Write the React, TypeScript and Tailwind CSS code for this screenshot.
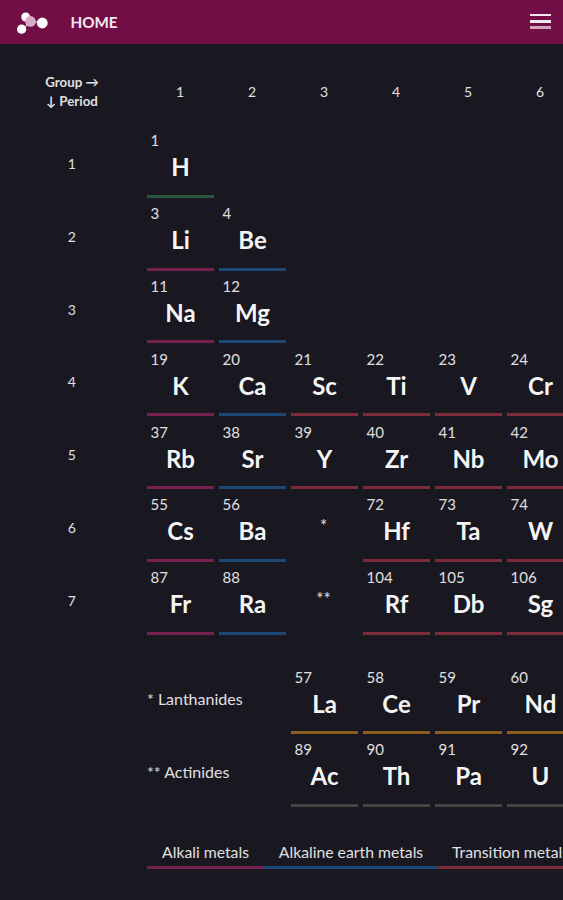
type Element = [number, string, string];

const GREEN = 'border-[#27573f]';
const PINK = 'border-[#762050]';
const BLUE = 'border-[#1c4875]';
const RED = 'border-[#7c2b39]';
const ORANGE = 'border-[#8b5c20]';
const GRAY = 'border-[#444340]';

const periods: (Element | string)[][] = [
  [[1, 'H', GREEN]],
  [[3, 'Li', PINK], [4, 'Be', BLUE]],
  [[11, 'Na', PINK], [12, 'Mg', BLUE]],
  [[19, 'K', PINK], [20, 'Ca', BLUE], [21, 'Sc', RED], [22, 'Ti', RED], [23, 'V', RED], [24, 'Cr', RED]],
  [[37, 'Rb', PINK], [38, 'Sr', BLUE], [39, 'Y', RED], [40, 'Zr', RED], [41, 'Nb', RED], [42, 'Mo', RED]],
  [[55, 'Cs', PINK], [56, 'Ba', BLUE], '*', [72, 'Hf', RED], [73, 'Ta', RED], [74, 'W', RED]],
  [[87, 'Fr', PINK], [88, 'Ra', BLUE], '**', [104, 'Rf', RED], [105, 'Db', RED], [106, 'Sg', RED]],
];

const series: [string, Element[]][] = [
  ['* Lanthanides', [[57, 'La', ORANGE], [58, 'Ce', ORANGE], [59, 'Pr', ORANGE], [60, 'Nd', ORANGE]]],
  ['** Actinides', [[89, 'Ac', GRAY], [90, 'Th', GRAY], [91, 'Pa', GRAY], [92, 'U', GRAY]]],
];

function Cell({ item }: { item: Element | string }) {
  if (typeof item === 'string') {
    return <div className="w-[67px] shrink-0 pt-[27px] pr-[2px] text-center text-[17px] leading-5">{item}</div>;
  }
  const [number, symbol, color] = item;
  return (
    <div className={`w-[67px] shrink-0 border-b-3 ${color}`}>
      <div className="pt-[5.4px] pl-[3.5px] text-[15px] leading-5">{number}</div>
      <div className="pt-[3px] text-center text-[24px] leading-7 font-bold text-[#f5f5f6]">{symbol}</div>
    </div>
  );
}

function Header() {
  return (
    <header className="flex h-[44px] items-center bg-[#720e45] pr-[12px] pl-4">
      <svg className="h-6 w-8" viewBox="0 0 32 24" fill="none">
        <path d="M14 12H26M14 12L6 20" stroke="#d9a9c4" strokeWidth="1.3" />
        <circle cx="9.7" cy="7" r="4.5" fill="#fff" />
        <circle cx="5.6" cy="19.2" r="4.6" fill="#fff" />
        <circle cx="14.5" cy="11.4" r="5.3" fill="#d9a9c8" />
        <circle cx="26.3" cy="13" r="5.4" fill="#fff" />
      </svg>
      <span className="ml-[22.5px] text-[15.2px] font-bold text-[#f4e9ef]">HOME</span>
      <div className="mb-px ml-auto flex w-[21px] flex-col gap-[3px]">
        <div className="mb-px h-[2px] bg-[#f3e6ed]" />
        <div className="h-[3px] bg-[#f3e6ed]" />
        <div className="h-[3px] bg-[#d0a5bb]" />
      </div>
    </header>
  );
}

export default function App() {
  return (
    <div className="h-[900px] w-[563px] overflow-hidden bg-[#19171f] font-['Lato',sans-serif] text-[#e0e0e2]">
      <Header />
      <div className="flex h-[81px] items-center pt-[14px]">
        <div className="w-[144px] shrink-0 text-center text-[13.3px] leading-[18.5px] font-bold">
          <div>Group →</div>
          <div>↓ Period</div>
        </div>
        {[1, 2, 3, 4, 5, 6].map((n) => (
          <div key={n} className="w-[72px] shrink-0 pt-px text-center text-[14px] leading-5">{n}</div>
        ))}
      </div>
      {periods.map((row, i) => (
        <div key={i} className="flex h-[72.8px] gap-[5px]">
          <div className="w-[142px] shrink-0 pt-[29px] pl-[1.5px] text-center text-[14px] leading-5">{i + 1}</div>
          {row.map((item, j) => <Cell key={j} item={item} />)}
        </div>
      ))}
      <div className="pt-[26.6px]">
        {series.map(([label, row]) => (
          <div key={label} className="flex h-[72.8px] gap-[5px] pl-[147px]">
            <div className="w-[139px] shrink-0 pt-[28px] text-[16px] leading-5">{label}</div>
            {row.map((item) => <Cell key={item[0]} item={item} />)}
          </div>
        ))}
      </div>
      <div className="mt-[30px] flex pl-[147px] text-[15.75px] leading-[29px] whitespace-nowrap">
        <div className={`w-[117px] shrink-0 border-b-3 text-center ${PINK}`}>Alkali metals</div>
        <div className={`w-[174px] shrink-0 border-b-3 text-center ${BLUE}`}>Alkaline earth metals</div>
        <div className={`w-[147px] shrink-0 border-b-3 pl-[14px] ${RED}`}>Transition metals</div>
      </div>
    </div>
  );
}
